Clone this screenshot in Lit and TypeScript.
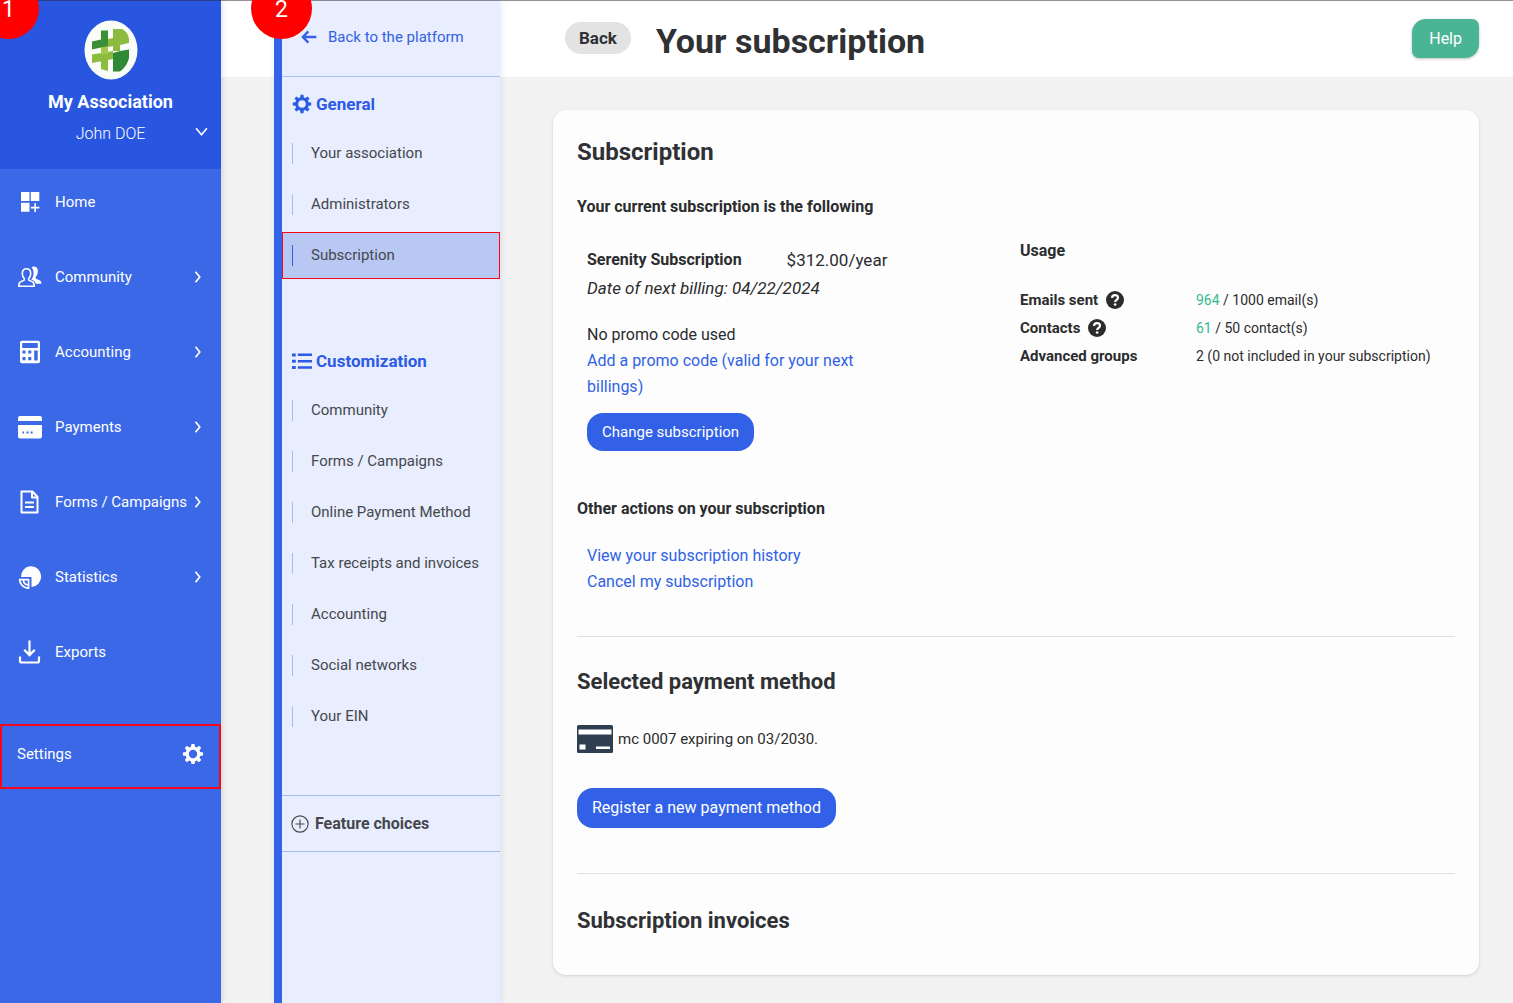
import { LitElement, html, svg, css, nothing, type TemplateResult } from "lit";
import { customElement, property } from "lit/decorators.js";
import { classMap } from "lit/directives/class-map.js";

const GEAR =
  "M10.3 1h3.4l.5 3.1 1.9.8 2.5-1.9 2.4 2.4-1.9 2.5.8 1.9 3.1.5v3.4l-3.1.5-.8 1.9 1.9 2.5-2.4 2.4-2.5-1.9-1.9.8-.5 3.1h-3.4l-.5-3.1-1.9-.8L5.400 21 3 18.600l1.900-2.500-.8-1.900L1 13.700v-3.400l3.100-.5.8-1.900L3 5.400 5.400 3l2.500 1.900 1.900-.8zM12 7.400a4.600 4.600 0 1 0 0 9.200 4.600 4.600 0 0 0 0-9.200z";

const ICONS: Record<string, TemplateResult> = {
  home: svg`<path fill="currentColor" d="M3 2h8.500v9H3zM12.800 2h8.500v9h-8.500zM3 12.800h8.500v9H3zM16.300 13.200h1.700v3.500h3.400v1.700H18V22h-1.700v-3.600h-3.400v-1.700h3.400z"/>`,
  community: svg`<path fill="currentColor" d="M13.500 2.200c3.200-1.600 6.400.2 6.400 3.800 0 2.500-.8 4.600-2.200 5.700v1.700l4.200 2c1 .5 1.500 1.400 1.500 3.400h-5.600c-.4-2-1.500-2.800-4.600-4.200 1.500-1.600 2.400-3.800 2.400-6.400 0-2.500-.7-4.700-2.100-6z"/>
    <path fill="none" stroke="currentColor" stroke-width="1.600" stroke-linejoin="round" d="M8.500 3.800c-2.700 0-4.200 1.900-4.200 4.700 0 2.200.8 3.900 2 5v1.600l-3.800 1.800c-1.100.6-1.700 1.700-1.700 4.300h15.400c0-2.600-.6-3.700-1.700-4.300l-3.800-1.800v-1.600c1.200-1.100 2-2.800 2-5 0-2.800-1.500-4.700-4.200-4.700z"/>`,
  accounting: svg`<path fill="currentColor" fill-rule="evenodd" d="M4 .800h16a2 2 0 0 1 2 2v18.400a2 2 0 0 1-2 2H4a2 2 0 0 1-2-2V2.800a2 2 0 0 1 2-2zM4.200 3v5h15.600V3zM4.500 10.500v3h3v-3zM10.300 10.500v3h3v-3zM4.500 17v3.300h3V17zM10.300 17v3.300h3V17zM16.200 10.500v10h3.500v-10z"/>`,
  payments: svg`<path fill="currentColor" fill-rule="evenodd" d="M2 1h20a2 2 0 0 1 2 2v3H0V3a2 2 0 0 1 2-2zM0 10h24v11.500a2 2 0 0 1-2 2H2a2 2 0 0 1-2-2zM4.500 16.500v2h1.600v-2zM8.500 16.500v2h2v-2zM12.600 16.500v2h2v-2z"/>`,
  forms: svg`<g fill="none" stroke="currentColor" stroke-width="2" stroke-linejoin="round"><path d="M3.500 1.500h11L19.500 7v15.500h-16z"/><path d="M14 1.500V7.500h5.500M7 12.500h9M7 17h9"/></g>`,
  statistics: svg`<path fill="currentColor" d="M13 1.200A9.800 10.300 0 1 1 13.500 22V12H3.200C3 6 7.400 1.200 13 1.200z"/><path fill="none" stroke="currentColor" stroke-width="1.700" stroke-linejoin="round" d="M10.600 14.600v8.600c-5 0-9-3.800-9-8.600zM5.400 15c0 2.600 1.800 4.500 5 5"/>`,
  exports: svg`<path fill="none" stroke="currentColor" stroke-width="2.200" d="M11.500.500v14M6.200 9.800l5.300 5.300 5.300-5.300M2 16.500v4.200c0 1.200.6 1.800 1.800 1.800h15.400c1.200 0 1.800-.6 1.800-1.800v-4.200"/>`,
  gear: svg`<path fill="currentColor" fill-rule="evenodd" d=${GEAR}/>`,
  list: svg`<path fill="currentColor" d="M0 3h4.500v3.500H0zM7 3h17v3H7zM0 10.500h4.500V14H0zM7 10.700h17v3H7zM0 18h4.500v3.500H0zM7 18.400h17v3H7z"/>`,
  plus: svg`<g fill="none" stroke="currentColor" stroke-width="1.500"><circle cx="12" cy="12" r="10.800"/><path d="M12 6v12M6 12h12"/></g>`,
  arrow: svg`<path fill="none" stroke="currentColor" stroke-width="3.600" d="M23 12H3M11 3.500L2.800 12l8.200 8.500"/>`,
  right: svg`<path fill="none" stroke="currentColor" stroke-width="3.400" d="M7 1.500l8.500 10.500L7 22.500"/>`,
  down: svg`<path fill="none" stroke="currentColor" stroke-width="3" d="M2 6l10 12L22 6"/>`,
  help: svg`<circle cx="12" cy="12" r="12" fill="currentColor"/><path fill="none" stroke="#fff" stroke-width="2.900" d="M8 9.200c.1-2.300 1.700-3.600 4-3.600s4 1.300 4 3.300c0 2.900-3.800 2.900-3.800 5.900"/><circle cx="12.200" cy="18" r="1.800" fill="#fff"/>`,
};

interface NavItem {
  label: string;
  icon: string;
  expandable: boolean;
}

const NAV: NavItem[] = [
  { label: "Home", icon: "home", expandable: false },
  { label: "Community", icon: "community", expandable: true },
  { label: "Accounting", icon: "accounting", expandable: true },
  { label: "Payments", icon: "payments", expandable: true },
  { label: "Forms / Campaigns", icon: "forms", expandable: true },
  { label: "Statistics", icon: "statistics", expandable: true },
  { label: "Exports", icon: "exports", expandable: false },
];

const SECTIONS = [
  {
    title: "General",
    icon: "gear",
    items: ["Your association", "Administrators", "Subscription"],
  },
  {
    title: "Customization",
    icon: "list",
    items: [
      "Community",
      "Forms / Campaigns",
      "Online Payment Method",
      "Tax receipts and invoices",
      "Accounting",
      "Social networks",
      "Your EIN",
    ],
  },
];

@customElement("ui-icon")
export class UiIcon extends LitElement {
  @property() name = "";

  static styles = css`
    :host {
      display: inline-flex;
      flex: none;
      width: 20px;
      height: 20px;
    }
    .glyph {
      width: 100%;
      height: 100%;
    }
  `;

  render() {
    return html`<svg class="glyph" viewBox="0 0 24 24" aria-hidden="true">${ICONS[this.name]}</svg>`;
  }
}

@customElement("side-bar")
export class SideBar extends LitElement {
  static styles = css`
    :host {
      display: block;
      background: #3b68e7;
      color: #fff;
      box-shadow: 1px 0 6px rgba(0, 0, 0, 0.14);
      font-size: 15px;
    }
    .account {
      box-sizing: border-box;
      height: 169px;
      padding-top: 20px;
      display: flex;
      flex-direction: column;
      align-items: center;
      background: #2856e1;
    }
    .logo {
      width: 54px;
      height: 60px;
    }
    .org {
      margin-top: 10px;
      font-size: 18px;
      line-height: 24px;
      font-weight: 700;
    }
    .user {
      align-self: stretch;
      display: grid;
      grid-template-columns: 1fr auto 1fr;
      align-items: start;
      margin-top: 8px;
      padding: 0 13px;
      border: 0;
      background: none;
      color: inherit;
      font: inherit;
      line-height: 24px;
    }
    .name {
      grid-column: 2;
      font-size: 16px;
      font-weight: 300;
    }
    .down {
      width: 13px;
      height: 13px;
      margin-top: 3px;
      justify-self: end;
    }
    .nav {
      display: flex;
      flex-direction: column;
      gap: 10px;
    }
    .link {
      box-sizing: border-box;
      height: 65px;
      display: flex;
      align-items: center;
      padding: 0 17px 0 18px;
      color: inherit;
      text-decoration: none;
    }
    .symbol {
      width: 24px;
      height: 24px;
      margin-right: 13px;
    }
    .label {
      flex: 1;
      white-space: nowrap;
    }
    .right {
      width: 12px;
      height: 12px;
    }
    .settings {
      margin-top: 40px;
      border: 2px solid #f6081a;
      padding: 0 15px 6px;
    }
    .gear {
      width: 22px;
      height: 22px;
    }
  `;

  render() {
    return html`
      <div class="account">
        <svg class="logo" viewBox="0 0 54 60" role="img" aria-label="Association logo">
          <ellipse cx="27" cy="30" rx="26.500" ry="29.500" fill="#fafcf8" />
          <path fill="#8dbb3f" d="M17 26h7v25l-7-2zM8 34.500l21-3.500v8L8 43z" />
          <path fill="#8dbb3f" d="M29 9h9c4 2 6.500 5.500 7 10v4l-9 2v6h-7v-5l-5 1v-8l5-1z" />
          <path fill="#a3c94b" d="M17 26.500l7-1v8l-7 1z" />
          <path fill="#3a8f37" d="M17 10.500h7V26L8 29.500v-8l9-2z" />
          <path fill="#2f8a36" d="M29 33l7-2 9-1.500v8c-1 6-5 11-9 14h-7z" />
        </svg>
        <div class="org">My Association</div>
        <button class="user" type="button">
          <span class="name">John DOE</span>
          <ui-icon class="down" name="down"></ui-icon>
        </button>
      </div>
      <nav class="nav">
        ${NAV.map(
          (item) => html`
            <a class="link" href="#">
              <ui-icon class="symbol" name=${item.icon}></ui-icon>
              <span class="label">${item.label}</span>
              ${item.expandable ? html`<ui-icon class="right" name="right"></ui-icon>` : nothing}
            </a>
          `,
        )}
      </nav>
      <a class="link settings" href="#">
        <span class="label">Settings</span>
        <ui-icon class="gear" name="gear"></ui-icon>
      </a>
    `;
  }
}

@customElement("settings-panel")
export class SettingsPanel extends LitElement {
  @property() current = "Subscription";

  static styles = css`
    :host {
      display: block;
      border-left: 8px solid #3563e8;
      background: #e8eefd;
      color: #45474d;
      box-shadow: 1px 0 6px rgba(60, 90, 200, 0.14);
      font-size: 15px;
    }
    .back {
      box-sizing: border-box;
      height: 77px;
      display: flex;
      align-items: center;
      gap: 11px;
      padding: 0 19px 2px;
      border-bottom: 1px solid #a9c0f5;
      color: #3460e5;
      text-decoration: none;
    }
    .arrow {
      width: 16px;
      height: 16px;
    }
    .section {
      padding-top: 1px;
    }
    .section + .section {
      padding-top: 56px;
    }
    .title {
      height: 52px;
      display: flex;
      align-items: center;
      gap: 4px;
      margin: 0;
      padding-left: 10px;
      color: #2d5be6;
      font-size: 17px;
      font-weight: 700;
    }
    .items {
      display: flex;
      flex-direction: column;
      gap: 4px;
      margin: 0;
      padding: 0;
      list-style: none;
    }
    .item {
      box-sizing: border-box;
      height: 47px;
      display: flex;
      align-items: center;
      padding-left: 10px;
      color: inherit;
      text-decoration: none;
    }
    .text {
      line-height: 21px;
      padding-left: 18px;
      border-left: 1px solid #a3bcf6;
    }
    .current {
      padding-left: 9px;
      border: 1px solid #f6081a;
      background: #b9c8f2;
    }
    .current .text {
      border-color: #2f5fe8;
    }
    .features {
      box-sizing: border-box;
      height: 57px;
      display: flex;
      align-items: center;
      gap: 6px;
      margin-top: 55px;
      padding-left: 9px;
      border: 1px solid #a9baf2;
      border-width: 1px 0;
      color: inherit;
      font-size: 16px;
      font-weight: 700;
      text-decoration: none;
    }
    .plus {
      width: 18px;
      height: 18px;
    }
  `;

  render() {
    return html`
      <a class="back" href="#"><ui-icon class="arrow" name="arrow"></ui-icon>Back to the platform</a>
      ${SECTIONS.map(
        (section) => html`
          <section class="section">
            <h2 class="title"><ui-icon name=${section.icon}></ui-icon>${section.title}</h2>
            <ul class="items">
              ${section.items.map(
                (label) => html`
                  <li>
                    <a class=${classMap({ item: true, current: label === this.current })} href="#">
                      <span class="text">${label}</span>
                    </a>
                  </li>
                `,
              )}
            </ul>
          </section>
        `,
      )}
      <a class="features" href="#"><ui-icon class="plus" name="plus"></ui-icon>Feature choices</a>
    `;
  }
}

@customElement("subscription-card")
export class SubscriptionCard extends LitElement {
  static styles = css`
    :host {
      display: block;
      padding: 26px 24px 38px;
      border-radius: 13px;
      background: #fdfdfd;
      box-shadow: 0 1px 3px rgba(0, 0, 0, 0.14);
      color: #2b2c2e;
      font-size: 16px;
      line-height: 26px;
    }
    .heading {
      margin: 0;
      color: #303134;
      font-size: 22px;
      line-height: 32px;
      font-weight: 700;
    }
    .lead {
      font-size: 24px;
    }
    .sub {
      margin: 0;
      font-size: 16px;
      line-height: 24px;
      font-weight: 700;
    }
    .first {
      margin-top: 27px;
    }
    .columns {
      display: grid;
      grid-template-columns: 1fr 1fr;
      gap: 8px;
      padding-top: 20px;
    }
    .plan {
      padding: 7px 0 0 10px;
    }
    .line {
      display: flex;
      gap: 45px;
      line-height: 28px;
    }
    .price {
      font-size: 17px;
    }
    .date {
      margin: 0 0 20px;
      font-size: 17px;
      line-height: 28px;
      font-style: italic;
    }
    .promo {
      max-width: 300px;
      margin: 0 0 13px;
    }
    .link {
      color: #2f62e6;
      text-decoration: none;
    }
    .primary {
      box-sizing: border-box;
      height: 38px;
      padding: 0 15px;
      border: 0;
      border-radius: 16px;
      background: #3261e7;
      color: #fff;
      font: inherit;
      font-size: 15px;
      line-height: 24px;
    }
    .usage {
      border-collapse: collapse;
      margin-top: 23px;
      font-size: 15px;
      line-height: 28px;
    }
    .measure {
      width: 176px;
      padding: 0;
      text-align: left;
      font-weight: 700;
    }
    .name {
      display: flex;
      align-items: center;
      gap: 8px;
    }
    .help {
      width: 18px;
      height: 18px;
    }
    .value {
      padding: 0;
      font-size: 14px;
    }
    .count {
      color: #37b993;
    }
    .other {
      margin-top: 46px;
    }
    .actions {
      display: flex;
      flex-direction: column;
      align-items: flex-start;
      padding: 22px 10px 0;
    }
    .rule {
      margin: 41px 0 0;
      border: 0;
      border-top: 1px solid #dfe0e2;
    }
    .next {
      margin-top: 29px;
    }
    .method {
      display: flex;
      align-items: center;
      gap: 5px;
      margin: 27px 0 35px;
      font-size: 15px;
    }
    .bank {
      width: 36px;
      height: 28px;
    }
    .register {
      height: 40px;
      font-size: 16px;
    }
    .last {
      margin-top: 45px;
    }
    .invoices {
      margin-top: 31px;
    }
  `;

  private help(topic: string) {
    return html`<ui-icon class="help" name="help" role="img" aria-label=${topic}></ui-icon>`;
  }

  render() {
    return html`
      <h2 class="heading lead">Subscription</h2>
      <h3 class="sub first">Your current subscription is the following</h3>
      <div class="columns">
        <div class="plan">
          <div class="line"><b>Serenity Subscription</b><span class="price">$312.00/year</span></div>
          <p class="date">Date of next billing: 04/22/2024</p>
          <p class="promo">
            No promo code used<br />
            <a class="link" href="#">Add a promo code (valid for your next billings)</a>
          </p>
          <button class="primary" type="button">Change subscription</button>
        </div>
        <div>
          <h3 class="sub">Usage</h3>
          <table class="usage">
            <tr>
              <th class="measure" scope="row"><span class="name">Emails sent ${this.help("About emails")}</span></th>
              <td class="value"><span class="count">964</span> / 1000 email(s)</td>
            </tr>
            <tr>
              <th class="measure" scope="row"><span class="name">Contacts ${this.help("About contacts")}</span></th>
              <td class="value"><span class="count">61</span> / 50 contact(s)</td>
            </tr>
            <tr>
              <th class="measure" scope="row">Advanced groups</th>
              <td class="value">2 (0 not included in your subscription)</td>
            </tr>
          </table>
        </div>
      </div>
      <h3 class="sub other">Other actions on your subscription</h3>
      <div class="actions">
        <a class="link" href="#">View your subscription history</a>
        <a class="link" href="#">Cancel my subscription</a>
      </div>
      <hr class="rule" />
      <h2 class="heading next">Selected payment method</h2>
      <div class="method">
        <svg class="bank" viewBox="0 0 36 28" aria-hidden="true">
          <rect width="36" height="28" rx="1.500" fill="#2f3e50" />
          <path fill="#fff" d="M1.500 4.500h33v5h-33zM2.500 19.500h6v5h-6zM19 21.500h14v2.500H19z" />
        </svg>
        <span>mc 0007 expiring on 03/2030.</span>
      </div>
      <button class="primary register" type="button">Register a new payment method</button>
      <hr class="rule last" />
      <h2 class="heading invoices">Subscription invoices</h2>
    `;
  }
}

@customElement("app-root")
export class AppRoot extends LitElement {
  static styles = css`
    :host {
      display: block;
      font-family: Roboto, "Liberation Sans", sans-serif;
    }
    .shell {
      position: relative;
      box-sizing: border-box;
      min-height: 100vh;
      display: grid;
      grid-template-columns: 221px 226px 1fr;
      overflow: hidden;
      background: linear-gradient(#fff 77px, #f2f2f2 77px);
    }
    .panel {
      margin-left: 53px;
      margin-right: -53px;
    }
    .main {
      padding: 0 34px 28px 106px;
    }
    .top {
      height: 77px;
      display: flex;
      align-items: center;
      gap: 25px;
      padding-left: 12px;
      margin-bottom: 33px;
    }
    .back,
    .help {
      border: 0;
      font: inherit;
      margin-bottom: 1px;
    }
    .back {
      height: 32px;
      padding: 0 14px;
      border-radius: 16px;
      background: #e3e3e3;
      color: #303134;
      font-size: 17px;
      font-weight: 700;
    }
    .title {
      flex: 1;
      margin: 0;
      padding-top: 4px;
      color: #303134;
      font-size: 34px;
      line-height: 44px;
      font-weight: 700;
    }
    .help {
      height: 39px;
      padding: 0 17px;
      border-radius: 14px 7px;
      background: #4ab594;
      box-shadow: 0 1px 3px rgba(0, 0, 0, 0.25);
      color: #fff;
      font-size: 16px;
    }
    .edge {
      position: absolute;
      inset: 0 0 auto;
      height: 1px;
      background: rgba(40, 40, 45, 0.5);
    }
    .badge {
      position: absolute;
      top: -22px;
      left: -22px;
      width: 61px;
      height: 61px;
      border-radius: 50%;
      background: #fe0000;
      color: #fff;
      font-size: 23px;
      line-height: 63px;
      text-align: center;
    }
    .second {
      left: 251px;
    }
  `;

  render() {
    return html`
      <div class="shell">
        <side-bar></side-bar>
        <settings-panel class="panel"></settings-panel>
        <main class="main">
          <header class="top">
            <button class="back" type="button">Back</button>
            <h1 class="title">Your subscription</h1>
            <button class="help" type="button">Help</button>
          </header>
          <subscription-card></subscription-card>
        </main>
        <div class="edge"></div>
        <span class="badge">1</span>
        <span class="badge second">2</span>
      </div>
    `;
  }
}
